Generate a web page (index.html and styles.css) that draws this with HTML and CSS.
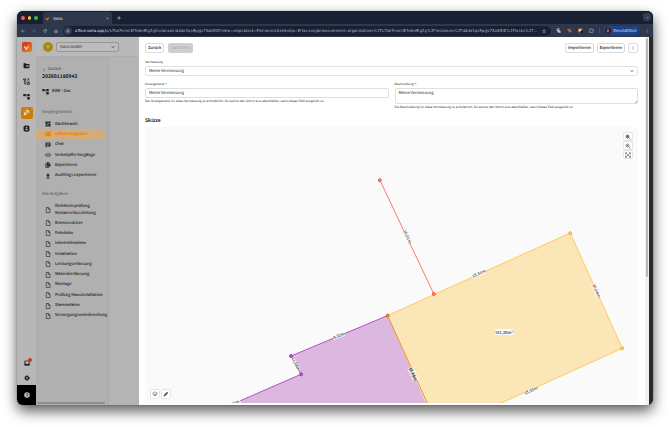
FILE: index.html
```html
<!DOCTYPE html>
<html lang="de">
<head>
<meta charset="utf-8">
<title>Vaira</title>
<link rel="stylesheet" href="styles.css">
</head>
<body>
<svg class="defs" aria-hidden="true">
  <symbol id="file" viewBox="0 0 24 24"><path d="M5 2h9l6 6v14H5zM13 2v7h7" fill="none" stroke="currentColor" stroke-width="2.4"/></symbol>
  <symbol id="chev" viewBox="0 0 24 24"><path d="M5 8l7 8 7-8" fill="none" stroke="currentColor" stroke-width="4"/></symbol>
  <symbol id="check" viewBox="0 0 24 24"><path d="M2 9l5-1 4 6L21 3l-2 7-8 12-4-7z" fill="currentColor"/></symbol>
  <symbol id="tree" viewBox="0 0 24 24"><path d="M1 3h8v8H1zM15 3h8v8h-8zM15 14h8v8h-8zM9 6h6v2H9zM11 7h2v12h3v-2h-3z" fill="currentColor"/></symbol>
  <symbol id="dots" viewBox="0 0 24 24"><path d="M10 3h4v4h-4zM10 10h4v4h-4zM10 17h4v4h-4z" fill="currentColor"/></symbol>
</svg>
<div class="window">
  <header class="tabs">
    <div class="lights"><i class="red"></i><i class="amber"></i><i class="green"></i></div>
    <div class="tab"><svg class="tab-logo"><use href="#check"/></svg><span>Vaira</span><button class="plain close" aria-label="Tab schließen"><svg viewBox="0 0 24 24"><path d="M5 5l14 14M19 5L5 19" stroke="currentColor" stroke-width="4"/></svg></button></div>
    <button class="plain" aria-label="Neuer Tab"><svg viewBox="0 0 24 24"><path d="M12 2v20M2 12h20" stroke="currentColor" stroke-width="4"/></svg></button>
    <button class="plain tab-search" aria-label="Tabs suchen"><svg><use href="#chev"/></svg></button>
  </header>
  <nav class="toolbar">
    <button class="plain" aria-label="Zurück"><svg viewBox="0 0 24 24"><path d="M22 12H4M11 4l-8 8 8 8" fill="none" stroke="currentColor" stroke-width="3"/></svg></button>
    <button class="plain dim" aria-label="Vor"><svg viewBox="0 0 24 24"><path d="M2 12h18M13 4l8 8-8 8" fill="none" stroke="currentColor" stroke-width="3"/></svg></button>
    <button class="plain" aria-label="Neu laden"><svg viewBox="0 0 24 24"><path d="M20 14a8 8 0 1 1-2-8l3 3M21 2v7h-7" fill="none" stroke="currentColor" stroke-width="3"/></svg></button>
    <button class="plain" aria-label="Startseite"><svg viewBox="0 0 24 24"><path d="M4 10l8-7 8 7v11h-5v-6H9v6H4z" fill="none" stroke="currentColor" stroke-width="3"/></svg></button>
    <div class="address">
      <button class="plain site" aria-label="Website-Informationen"><svg viewBox="0 0 24 24"><path d="M3 7h10M18 7h3M3 17h3M11 17h10" stroke="currentColor" stroke-width="3"/><circle cx="15" cy="7" r="3" fill="none" stroke="currentColor" stroke-width="3"/><circle cx="8" cy="17" r="3" fill="none" stroke="currentColor" stroke-width="3"/></svg></button>
      <input class="url" aria-label="Adresse" value="office.vaira.app/o/c7be7mnm5f1rdro8tg2g/instances/d4de2qs8pgjc73alk9t0?view=steps&amp;task=Einmessskizze&amp;step=Erfassung&amp;measurement=organizations%2Fc7be7mnm5f1rdro8tg2g%2Finstances%2Fd4de2qs8pgjc73alk9t0%2Ftasks%2FEinmessskizze%2Fsteps">
      <button class="plain" aria-label="Lesezeichen"><svg viewBox="0 0 24 24"><path d="M12 3l3 6 7 1-5 5 1 7-6-4-6 4 1-7-5-5 7-1z" fill="none" stroke="currentColor" stroke-width="2.5"/></svg></button>
    </div>
    <div class="extensions">
      <svg viewBox="0 0 24 24"><path d="M4 2h13v5h-8v4h9v9H8v-6H4z" fill="#d9e5ff"/><path d="M2 1h8v9H2z" fill="#4478dc"/><path d="M12 15h11v8H12z" fill="#a9bfec"/></svg>
      <svg viewBox="0 0 24 24"><path d="M3 3l8 6V2h3v7a6 6 0 1 1-5 6L2 6zM6 20l4-4" fill="#f57b45"/><circle cx="15" cy="14" r="3" fill="#2e384c"/></svg>
      <svg viewBox="0 0 24 24"><path d="M1 2h19v18H1z" fill="#f17522"/><path d="M5 6l6 4 6-4-3 7-9 3z" fill="#fff"/><circle cx="18" cy="18" r="6" fill="#111"/></svg>
      <svg viewBox="0 0 24 24"><path d="M3 6h5a3 3 0 0 1 6 0h5v5a3 3 0 0 1 0 6v4H3v-5a3 3 0 0 0 0-5z" fill="none" stroke="#c5cbd8" stroke-width="2.5"/></svg>
    </div>
    <button class="profile"><svg viewBox="0 0 24 24"><circle cx="12" cy="12" r="12" fill="#301914"/><path d="M7 7q5-6 9 0v8l-4 5-5-5z" fill="#c45d31"/></svg>Geschäftlich</button>
    <button class="plain" aria-label="Menü"><svg><use href="#dots"/></svg></button>
  </nav>
  <div class="app">
    <aside class="rail">
      <a href="#" class="logo" aria-label="Vaira"><svg><use href="#check"/></svg></a>
      <nav class="rail-nav">
        <a href="#" aria-label="Projekte"><svg viewBox="0 0 24 24"><path d="M2 4h8l2 3h10v14H2z" fill="currentColor"/><path d="M11 11h8v6h-8z" fill="#b5b5b5"/><path d="M13 13h4v2h-4z" fill="currentColor"/></svg></a>
        <a href="#" aria-label="Pläne"><svg viewBox="0 0 24 24"><path d="M2 3h7v4H2zM15 2l7 6M22 2l-7 6M6 7v13M18 10v8M4 20h7M14 16h8v6h-8zM6 14l6-3" fill="none" stroke="currentColor" stroke-width="2.5"/></svg></a>
        <a href="#" aria-label="Vorgänge"><svg><use href="#tree"/></svg></a>
        <a href="#" class="current" aria-label="Aufgaben"><svg viewBox="0 0 24 24"><path d="M9 5l5-4 9 9-5 5zM7 8l8 8-5 5H3v-8z" fill="#e5d5bd"/><path d="M6 14l6-6 5 5-6 6" fill="none" stroke="#cf7c0b" stroke-width="1.5"/></svg></a>
        <a href="#" aria-label="Kontakte"><svg viewBox="0 0 24 24"><rect x="2" y="3" width="20" height="18" rx="3" fill="currentColor"/><path d="M6 0h12v2H6zM6 22h12v2H6z" fill="currentColor"/><circle cx="12" cy="9" r="3" fill="#b5b5b5"/><path d="M6 18q6-8 12 0z" fill="#b5b5b5"/></svg></a>
      </nav>
      <nav class="rail-bottom">
        <a href="#" class="inbox" aria-label="Posteingang"><svg viewBox="0 0 24 24"><path d="M3 4h18v17H3z" fill="none" stroke="currentColor" stroke-width="3"/><path d="M3 14h5l2 3h4l2-3h5v7H3z" fill="currentColor"/></svg><i class="badge"></i></a>
        <a href="#" aria-label="Einstellungen"><svg viewBox="0 0 24 24"><circle cx="12" cy="12" r="6" fill="none" stroke="currentColor" stroke-width="5"/><circle cx="12" cy="12" r="9" fill="none" stroke="currentColor" stroke-width="4" stroke-dasharray="5 4.4"/></svg></a>
        <a href="#" class="help" aria-label="Hilfe"><svg viewBox="0 0 24 24"><circle cx="12" cy="12" r="11" fill="#c9c9c9"/><path d="M8 10a4 4 0 1 1 4 4v2M12 17v3" fill="none" stroke="#000" stroke-width="2.5"/></svg></a>
      </nav>
    </aside>
    <div class="office">
      <header class="org">
        <span class="avatar">V</span>
        <div class="select org-select"><select aria-label="Organisation"><option>Vaira GmbH</option></select><svg><use href="#chev"/></svg></div>
      </header>
      <div class="side">
        <a href="#" class="back"><svg viewBox="0 0 24 24"><path d="M16 3l-8 9 8 9" fill="none" stroke="currentColor" stroke-width="3"/></svg>Zurück</a>
        <h1>202601180942</h1>
        <p class="type"><svg><use href="#tree"/></svg>EWE - Gas</p>
        <h2>Vorgangsdetails</h2>
        <ul class="details">
          <li><a href="#"><svg viewBox="0 0 24 24"><path d="M2 2h9v11H2zM13 2h9v7h-9zM2 15h9v7H2zM13 11h9v11h-9z" fill="currentColor"/></svg>Dashboards</a></li>
          <li><a href="#" class="active"><svg viewBox="0 0 24 24"><path d="M1 3h22v18H1z" fill="currentColor"/><path d="M4 8h7M4 12h7M4 16h5M13 13l3 3 5-6" fill="none" stroke="#d5ab7b" stroke-width="2"/></svg>Offene Aufgaben</a></li>
          <li><a href="#"><svg viewBox="0 0 24 24"><path d="M2 2h20v16H6l-4 5z" fill="currentColor"/><path d="M6 6h12v2H6zM6 9h12v2H6zM6 12h8v2H6z" fill="#b1b1b1"/></svg>Chat</a></li>
          <li><a href="#"><svg viewBox="0 0 24 24"><path d="M11 7H7a5 5 0 0 0 0 10h4M13 7h4a5 5 0 0 1 0 10h-4M8 12h8" fill="none" stroke="currentColor" stroke-width="2.6"/></svg>Verknüpfte Vorgänge</a></li>
          <li><a href="#"><svg viewBox="0 0 24 24"><path d="M2 5h3v15h11v3H2zM7 1h9l6 6v11H7z" fill="currentColor"/><path d="M15 3v5h5" fill="none" stroke="#b1b1b1" stroke-width="2"/></svg>Exportieren</a></li>
          <li><a href="#"><svg viewBox="0 0 24 24"><path d="M9 2h6v7h5l-8 8-8-8h5zM4 19h16v3H4z" fill="currentColor"/></svg>Auditlogs exportieren</a></li>
        </ul>
        <h2 class="all">Alle Aufgaben</h2>
        <ul class="tasks">
          <li><a href="#"><svg><use href="#file"/></svg><span>Dichtheitsprüfung<br>Netzanschlussleitung</span></a></li>
          <li><a href="#"><svg><use href="#file"/></svg>Einmessskizze</a></li>
          <li><a href="#"><svg><use href="#file"/></svg>Fotodoku</a></li>
          <li><a href="#"><svg><use href="#file"/></svg>Inbetriebnahme</a></li>
          <li><a href="#"><svg><use href="#file"/></svg>Installation</a></li>
          <li><a href="#"><svg><use href="#file"/></svg>Leistungserfassung</a></li>
          <li><a href="#"><svg><use href="#file"/></svg>Materialerfassung</a></li>
          <li><a href="#"><svg><use href="#file"/></svg>Montage</a></li>
          <li><a href="#"><svg><use href="#file"/></svg>Prüfung Hausinstallation</a></li>
          <li><a href="#"><svg><use href="#file"/></svg>Stammdaten</a></li>
          <li><a href="#"><svg><use href="#file"/></svg>Versorgungsunterbrechung</a></li>
        </ul>
        <div class="side-scroll"></div>
      </div>
    </div>
    <main class="drawer">
      <div class="content">
        <div class="actions">
          <button class="btn">Zurück</button>
          <button class="btn" disabled>Speichern</button>
          <span class="grow"></span>
          <button class="btn">Importieren</button>
          <button class="btn">Exportieren</button>
          <button class="btn more" aria-label="Mehr"><svg><use href="#dots"/></svg></button>
        </div>
        <div class="field">
          <label for="measure">Vermessung</label>
          <div class="select"><select id="measure"><option>Meine Vermessung</option></select><svg><use href="#chev"/></svg></div>
        </div>
        <div class="pair">
          <div class="field">
            <label for="name">Anzeigename *</label>
            <input id="name" class="box" value="Meine Vermessung">
            <p>Der Anzeigename für diese Vermessung ist erforderlich. Du kannst den Schritt erst abschließen, wenn dieses Feld ausgefüllt ist.</p>
          </div>
          <div class="field">
            <label for="desc">Beschreibung *</label>
            <textarea id="desc" class="box">Meine Vermessung</textarea>
            <p>Die Beschreibung für diese Vermessung ist erforderlich. Du kannst den Schritt erst abschließen, wenn dieses Feld ausgefüllt ist.</p>
          </div>
        </div>
        <h2 class="sketch-title">Skizze</h2>
        <div class="sketch">
          <svg class="plan" viewBox="145 127 493 276" preserveAspectRatio="xMinYMin slice" role="img" aria-label="Skizze der Vermessung">
            <path d="M387.6 315.6L291 356l10 18.3L180 427l258 4z" fill="#dcb8e0"/>
            <path d="M180 427l121-52.7L291 356l96.6-40.4" fill="none" stroke="#b252c2"/>
            <path d="M387.6 315.6L570.2 233l52.1 115.3L439.7 430.9z" fill="#fbe6b8" stroke="#fccb5c"/>
            <path d="M387.6 315.6l52.1 115.3" stroke="#e6934a"/>
            <path d="M379.8 180l54 113.9" stroke="#fb7a6c"/>
            <g fill="#bd5fcc" stroke="#9d3ab0"><circle cx="291" cy="356" r="1.5"/><circle cx="301" cy="374.3" r="1.5"/></g>
            <g fill="#fdd05c" stroke="#efb22e"><circle cx="570.2" cy="233.2" r="1.5"/><circle cx="622.3" cy="348.3" r="1.5"/></g>
            <circle cx="387.6" cy="315.6" r="1.5" fill="#ea8d3c" stroke="#c96b30"/>
            <g fill="#fc8f7e" stroke="#ef5545"><circle cx="379.8" cy="180.2" r="1.5"/><circle cx="433.8" cy="293.9" r="1.5"/></g>
            <g class="tags">
              <g transform="translate(407 237) rotate(65)"><rect x="-7" y="-2" width="14" height="4"/><text y="1">10,01m</text></g>
              <g transform="translate(479 274) rotate(-24)"><rect x="-7" y="-2" width="14" height="4"/><text y="1">15,01m</text></g>
              <g transform="translate(596 291) rotate(66)"><rect x="-7" y="-2" width="14" height="4"/><text y="1">10,04m</text></g>
              <g transform="translate(531 391) rotate(-24)"><rect x="-7" y="-2" width="14" height="4"/><text y="1">15,03m</text></g>
              <g transform="translate(413 374) rotate(66)"><rect x="-7" y="-3" width="14" height="6"/><text y="1">10,03m</text><text y="2">10,09m</text></g>
              <g transform="translate(339 336) rotate(-22)"><rect x="-6" y="-2" width="12" height="4"/><text y="1">9,32m</text></g>
              <g transform="translate(296 365) rotate(62)"><rect x="-6" y="-2" width="12" height="4"/><text y="1">1,68m</text></g>
              <g transform="translate(234 404) rotate(-23)"><rect x="-7" y="-2" width="14" height="4"/><text y="1">7,06m</text></g>
              <g transform="translate(504 332)"><rect x="-9" y="-3" width="18" height="6" rx="1"/><text y="2">161,26m²</text></g>
            </g>
          </svg>
          <div class="zoom">
            <button class="tool" aria-label="Vergrößern"><svg viewBox="0 0 24 24"><circle cx="10" cy="10" r="6" fill="#999" stroke="currentColor" stroke-width="3"/><path d="M15 15l7 7M10 7v6M7 10h6" stroke="currentColor" stroke-width="3"/></svg></button>
            <button class="tool" aria-label="Verkleinern"><svg viewBox="0 0 24 24"><circle cx="10" cy="10" r="6" fill="none" stroke="currentColor" stroke-width="3"/><path d="M15 15l7 7M7 10h6" stroke="currentColor" stroke-width="3"/></svg></button>
            <button class="tool" aria-label="Einpassen"><svg viewBox="0 0 24 24"><path d="M2 9V3h6M16 3h6v6M22 15v6h-6M8 21H2v-6M3 4l18 16M21 4L3 20" fill="none" stroke="currentColor" stroke-width="2.5"/></svg></button>
          </div>
          <div class="tools">
            <button class="tool" aria-label="Ebenen"><svg viewBox="0 0 24 24"><path d="M12 3l9 6-9 6-9-6zM3 14l9 6 9-6" fill="none" stroke="currentColor" stroke-width="2.5"/></svg></button>
            <button class="tool" aria-label="Zeichnen"><svg viewBox="0 0 24 24"><path d="M2 22l2-7L16 3l5 5L9 20z" fill="currentColor"/></svg></button>
          </div>
        </div>
      </div>
      <div class="scroll"><i></i></div>
    </main>
  </div>
</div>
</body>
</html>
```
FILE: styles.css
```css
* { box-sizing: border-box; }
body {
  margin: 0;
  height: 100vh;
  padding: 11px 17px 22px;
  background: #fff;
  font: 4px/7px "Noto Sans CJK JP", "Noto Sans", sans-serif;
  text-rendering: geometricPrecision;
  color: #222;
  overflow: hidden;
}
svg { display: block; flex: none; width: 6px; height: 6px; }
.defs { position: absolute; width: 0; height: 0; }
h1, h2, p, ul { margin: 0; padding: 0; }
ul { list-style: none; }
a { color: inherit; text-decoration: none; }
button, input, select, textarea { font: inherit; text-rendering: inherit; color: inherit; margin: 0; padding: 0; border: 0; background: none; }
.grow { flex: 1; }

.window {
  height: 100%;
  display: flex;
  flex-direction: column;
  border-radius: 6px;
  overflow: hidden;
  background: #2a2a2a;
  box-shadow: 0 0 1px #333, 0 6px 14px rgba(0, 0, 0, .65);
}
.plain { display: flex; align-items: center; justify-content: center; color: #c5cbd8; }
.plain svg { width: 4px; height: 4px; }
.dim { color: #737c8e; }

.tabs { display: flex; align-items: stretch; height: 13px; padding: 0 2px 0 4px; background: #192033; gap: 5px; }
.lights { display: flex; align-items: center; gap: 3px; width: 17px; }
.lights i { width: 4px; height: 4px; border-radius: 50%; }
.red { background: #ff5b52; }
.amber { background: #f9bd2d; }
.green { background: #28c63f; }
.tab { display: flex; align-items: center; gap: 3px; width: 69px; padding: 0 3px 0 2px; margin-top: 1px; background: #2e384c; border-radius: 3px 3px 0 0; color: #e9ecf3; font-family: Inter, sans-serif; }
.tab-logo { color: #f3921f; width: 5px; height: 5px; }
.close { margin-left: auto; }
.close svg { width: 3px; height: 3px; }
.tab-search { width: 8px; height: 8px; margin: 2px 0 0 auto; border-radius: 3px; background: #333c50; }
.tab-search svg { width: 3px; height: 3px; }

.toolbar { display: flex; align-items: center; height: 13px; padding: 0 4px; gap: 7px; background: #2e384c; }
.address { flex: 1; display: flex; align-items: center; height: 10px; gap: 3px; margin: 0 -2px; padding: 0 5px 0 1px; border-radius: 5px; background: #192033; }
.site { width: 8px; height: 8px; border-radius: 50%; background: #333c50; }
.url {
  flex: 1;
  min-width: 0;
  font-family: Inter, sans-serif;
  text-overflow: ellipsis;
  color: transparent;
  background: linear-gradient(90deg, #fff 31px, #b5bccb 31px);
  -webkit-background-clip: text;
  background-clip: text;
}
.extensions { display: flex; gap: 6px; align-items: center; padding-right: 5px; border-right: 1px solid #465067; }
.extensions svg { width: 5px; height: 5px; }
.profile { display: flex; align-items: center; gap: 2px; height: 9px; width: 37px; padding: 0 3px 0 2px; margin: 0 -2px 0 -4px; border-radius: 5px; background: #1e4287; color: #d5e2ff; font-family: Inter, sans-serif; }

.app { flex: 1; min-height: 0; display: flex; padding-right: 4px; }
.rail { flex: none; width: 19px; display: flex; flex-direction: column; align-items: center; background: #b7b7b7; color: #1c1c1c; }
.logo { display: flex; align-items: center; justify-content: center; width: 10px; height: 10px; margin: 5px 0 6px; border-radius: 2px; background: linear-gradient(135deg, #cf2a20, #e98619); color: #ddd; }
.logo svg { width: 7px; height: 7px; }
.rail-nav { display: grid; grid-template-rows: repeat(5, 1fr); height: 78px; }
.rail-nav a { display: flex; align-items: center; justify-content: center; width: 12px; height: 12px; align-self: center; }
.rail-nav svg { width: 7px; height: 7px; }
.rail-nav .current { border-radius: 2px; background: #cf7c0b; }
.rail-bottom { width: 100%; margin-top: auto; display: flex; flex-direction: column; align-items: center; gap: 9px; }
.inbox { position: relative; }
.badge { position: absolute; top: -2px; right: -2px; width: 4px; height: 4px; border-radius: 50%; background: #c93723; }
.help { display: flex; align-items: center; justify-content: center; width: 100%; height: 20px; background: #000; margin-top: -5px; }

.office { flex: none; width: 103px; display: flex; flex-direction: column; background: #b4b4b4; }
.org { flex: none; display: flex; align-items: center; gap: 3px; height: 20px; padding-left: 7px; background: #b9b9b9; border-bottom: 1px solid #acacac; }
.avatar { width: 10px; height: 10px; border-radius: 50%; background: #a38b16; color: #e5deb8; line-height: 10px; text-align: center; }
.select { display: flex; align-items: center; height: 10px; padding: 0 3px; border: 1px solid #e2e2e2; border-radius: 2px; background: #fff; }
.select select { flex: 1; min-width: 0; appearance: none; font-size: 4px; line-height: 8px; }
.select svg { width: 4px; height: 4px; }
.org-select { width: 63px; background: #bcbcbc; border-color: #989898; }
.side { flex: 1; min-height: 0; width: 73px; display: flex; flex-direction: column; padding: 9px 0 1px; background: #b0b0b0; border-right: 1px solid #a9a9a9; overflow: hidden; font-weight: 500; }
.back { display: flex; align-items: center; gap: 2px; padding-left: 6px; color: #555; }
.back svg { width: 4px; height: 4px; }
h1 { padding-left: 6px; font-size: 5px; line-height: 8px; color: #111; }
.type { display: flex; align-items: center; gap: 3px; padding: 7px 0 2px 6px; }
.type svg { width: 7px; height: 7px; }
.side h2 { margin-top: 12px; padding-left: 6px; font-size: 4px; font-weight: 500; color: #666; }
.side .all { margin-top: 10px; }
.details, .tasks { display: grid; width: 72px; overflow: hidden; white-space: nowrap; }
.details { grid-template-rows: repeat(6, 1fr); height: 62px; margin-top: 3px; }
.tasks { grid-template-rows: 16px repeat(10, 1fr); height: 119px; margin-top: 4px; }
.side li { display: grid; }
.side li a { display: flex; align-items: center; gap: 4px; padding-left: 9px; }
.side li .active { margin-right: 3px; border-radius: 0 5px 5px 0; background: #d5ab7b; color: #df850c; font-weight: 700; }
.side-scroll { margin: auto 3px 0 1px; height: 2px; border-radius: 1px; background: #8e8e8e; }

.drawer { flex: 1; min-width: 0; display: flex; background: #fff; }
.content { flex: 1; min-width: 0; display: flex; flex-direction: column; padding: 6px 7px 2px 6px; }
.actions { display: flex; gap: 3px; height: 10px; }
.btn { display: flex; align-items: center; justify-content: center; padding: 0 2px; border: 1px solid #dcdcdc; border-radius: 2px; background: #fff; line-height: 8px; font-weight: 500; }
.btn:disabled { margin-left: 1px; background: #cfcfcf; border-color: #cfcfcf; color: #a5a5a5; font-weight: 400; }
.more { width: 10px; }
.more svg { width: 4px; height: 4px; }
.field { display: flex; flex-direction: column; font-family: "Noto Sans", sans-serif; font-size: 3px; color: #222; }
.actions + .field { margin-top: 6px; }
.field p { white-space: nowrap; }
.select select, .box { font-family: "Noto Sans CJK JP", "Noto Sans", sans-serif; }
.pair { display: grid; grid-template-columns: 1fr 1fr; gap: 6px; margin-top: 5px; }
.box { height: 10px; padding: 0 3px; border: 1px solid #dedede; border-radius: 2px; background: #fff; font-size: 4px; line-height: 8px; }
textarea.box { display: block; height: 16px; resize: none; overflow: hidden; background: linear-gradient(135deg, #fff 50%, #bbb 50%) right bottom / 3px 3px no-repeat #fff; }
.sketch-title { margin-top: 6px; font-size: 5px; line-height: 8px; color: #111; }
.sketch { position: relative; flex: 1; min-height: 0; margin-top: 2px; border-radius: 3px; background: #fafafa; overflow: hidden; }
.plan { width: 100%; height: 100%; }
.tags rect { fill: #fdfdfd; }
.tags text { font-size: 4px; font-weight: 500; text-anchor: middle; fill: #333; }
.tool { display: flex; align-items: center; justify-content: center; width: 10px; height: 10px; border: 1px solid #e4e4e4; border-radius: 2px; background: #fff; color: #555; }
.tool svg { width: 6px; height: 6px; }
.zoom { position: absolute; top: 5px; right: 5px; }
.zoom .tool { height: 9px; }
.tools { position: absolute; left: 5px; bottom: 4px; display: flex; gap: 1px; }
.scroll { flex: none; width: 4px; background: #f1f1f1; }
.scroll i { display: block; height: 65%; margin: 1px 1px 0; border-radius: 1px; background: #b9b9b9; }
```
